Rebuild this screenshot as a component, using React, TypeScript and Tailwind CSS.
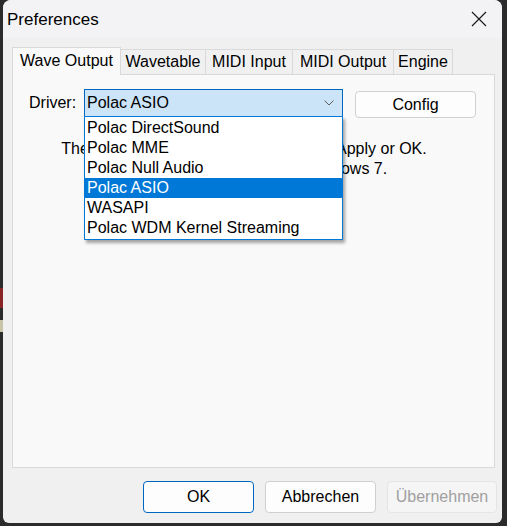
import React from 'react';

const tabs = [
    { label: 'Wave Output', w: 'w-[109px]' },
    { label: 'Wavetable', w: 'w-[85px]' },
    { label: 'MIDI Input', w: 'w-[87px]' },
    { label: 'MIDI Output', w: 'w-[101px]' },
    { label: 'Engine', w: 'w-[59px]' },
];

const drivers = [
    'Polac DirectSound',
    'Polac MME',
    'Polac Null Audio',
    'Polac ASIO',
    'WASAPI',
    'Polac WDM Kernel Streaming',
];

const App: React.FC = () => {
    const selected = 'Polac ASIO';

    return (
        <div className="w-[507px] h-[526px] flex bg-[#2b2b2b] pr-[5px] pb-[3px] font-['Liberation_Sans',Arial,sans-serif] text-[16px] text-black">
            {/* bit of the app behind the dialog */}
            <div className="w-[3px] flex flex-col">
                <div className="h-[288px]" />
                <div className="h-[20px] bg-[#8a2424]" />
                <div className="h-[12px]" />
                <div className="h-[12px] bg-[#c9c3a8]" />
            </div>

            <div className="flex-1 flex flex-col bg-[#f0f0f0] rounded-t-[8px] rounded-b-[6px] overflow-hidden">
                {/* Title bar */}
                <div className="h-[38px] flex items-center justify-between bg-[#f3f3f6] pl-[4px] pr-[12px]">
                    <span className="text-[17px] leading-none">Preferences</span>
                    <svg width="16" height="16" viewBox="0 0 16 16" className="mr-[3px]">
                        <path d="M1 1 L15 15 M15 1 L1 15" stroke="#1a1a1a" strokeWidth="1.2" fill="none" />
                    </svg>
                </div>

                <div className="flex-1 flex flex-col pl-[9px] pr-[7px] pt-[8px]">
                    {/* Tabs */}
                    <div className="h-[28px] flex items-end">
                        {tabs.map((t, i) => (
                            <div
                                key={t.label}
                                className={`${t.w} flex items-center justify-center border-t border-r border-[#d9d9d9] ${
                                    i === 0
                                        ? 'h-[28px] border-l bg-[#f9f9f9] relative z-10 -mb-px pb-px'
                                        : 'h-[25px] bg-[#f0f0f0]'
                                }`}
                            >
                                {t.label}
                            </div>
                        ))}
                    </div>

                    {/* Pane */}
                    <div className="h-[394px] border border-[#d9d9d9] bg-[#f9f9f9] relative pl-[16px] pt-[13px]">
                        <div className="flex items-center">
                            <span className="w-[55px]">Driver:</span>
                            <div className="w-[259px] h-[28px] border border-[#0067c0] bg-[#cce4f7] flex items-center justify-between pl-[2px] pr-[8px]">
                                <span>{selected}</span>
                                <svg width="10" height="6" viewBox="0 0 10 6">
                                    <path d="M0.5 0.5 L5 5 L9.5 0.5" stroke="#606060" strokeWidth="1" fill="none" />
                                </svg>
                            </div>
                            <button className="ml-[12px] w-[121px] h-[27px] rounded-[4px] border border-[#d0d0d0] bg-[#fdfdfd] mt-[3px]">
                                Config
                            </button>
                        </div>

                        <div className="mt-[21px] w-[366px] ml-[32px] text-center leading-[20px]">
                            <div className="whitespace-nowrap">The new driver is in use after you click Apply or OK.</div>
                            <div className="whitespace-nowrap">Use ASIO for low latency on Windows 7.</div>
                        </div>

                        {/* Open dropdown list */}
                        <div className="absolute left-[71px] top-[41px] w-[259px] border border-[#0078d7] bg-white py-px shadow-[2px_3px_3px_rgba(0,0,0,0.35)] z-20">
                            {drivers.map((d) => (
                                <div
                                    key={d}
                                    className={`h-[20px] leading-[20px] pl-[2px] whitespace-nowrap ${
                                        d === selected ? 'bg-[#0078d7] text-white' : ''
                                    }`}
                                >
                                    {d}
                                </div>
                            ))}
                        </div>
                    </div>

                    {/* Buttons */}
                    <div className="flex justify-end gap-[11px] mt-[13px] -mr-[2px]">
                        <button className="w-[111px] h-[32px] rounded-[4px] border border-[#0067c0] bg-[#fdfdfd]">OK</button>
                        <button className="w-[111px] h-[32px] rounded-[4px] border border-[#d0d0d0] bg-[#fdfdfd]">Abbrechen</button>
                        <button className="w-[110px] h-[32px] rounded-[4px] border border-[#e5e5e5] bg-[#f5f5f5] text-[#a0a0a0]" disabled>
                            Übernehmen
                        </button>
                    </div>
                </div>
            </div>
        </div>
    );
};

export default App;
